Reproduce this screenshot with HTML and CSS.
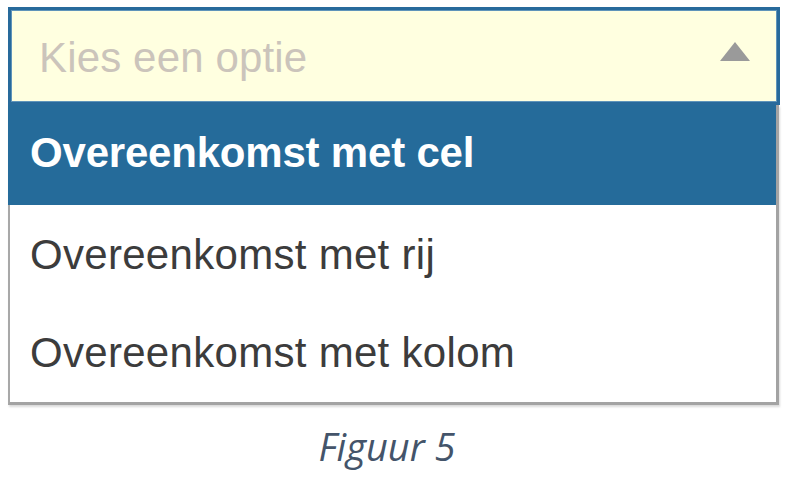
FILE: index.html
```html
<!DOCTYPE html>
<html>
<head>
    <title>Figuur 5</title>
    <link rel="stylesheet" href="styles.css">
</head>
<body>
    <div class="figure">
        <div class="dropdown">
            <div class="select">
                <span class="placeholder">Kies een optie</span>
                <svg class="arrow" width="30" height="19" viewBox="0 0 30 19">
                    <polygon points="15,0 30,19 0,19" fill="#9a9a9a"/>
                </svg>
            </div>
            <ul class="options">
                <li class="option active">Overeenkomst met cel</li>
                <li class="option">Overeenkomst met rij</li>
                <li class="option">Overeenkomst met kolom</li>
            </ul>
        </div>
        <p class="caption">Figuur 5</p>
    </div>
</body>
</html>
```

FILE: styles.css
```css
body {
    margin: 0;
    padding: 0;
    background: white;
    font-family: "Liberation Sans", Arial, sans-serif;
}

.figure {
    padding: 7px 7px 0 8px;
}

.dropdown {
    display: flex;
    flex-direction: column;
}

.select {
    display: flex;
    justify-content: space-between;
    align-items: center;
    height: 89px;
    padding: 3px 27px 0 28px;
    background: #ffffe0;
    border: 3px solid #286a9b;
    box-shadow: inset 0 0 0 1px #5f94ba;
}

.placeholder {
    font-size: 42px;
    line-height: 89px;
    color: #cbc4bb;
    letter-spacing: 0.15px;
}

.arrow {
    margin-top: -12px;
}

.options {
    list-style: none;
    margin: 0;
    padding: 0;
    background: white;
    border-left: 2px solid #a8a8a8;
    border-right: 3px solid #a3a3a3;
    border-bottom: 3px solid #a3a3a3;
    box-shadow: 1px 2px 2px rgba(0,0,0,0.15);
    margin-right: 1px;
}

.option {
    font-size: 42px;
    line-height: 100px;
    height: 100px;
    padding-left: 20px;
    color: #3c3c3c;
    letter-spacing: 0.3px;
}

.option:last-child {
    line-height: 96px;
    height: 97px;
}

.option.active {
    background: #256b9a;
    color: white;
    font-weight: bold;
    line-height: 96px;
    margin-left: -2px;
    padding-left: 22px;
    letter-spacing: -0.2px;
}

.caption {
    margin: 15px 0 0;
    padding-right: 14px;
    text-align: center;
    font-family: "Open Sans", sans-serif;
    font-style: italic;
    font-size: 38px;
    color: #44546a;
}
```
